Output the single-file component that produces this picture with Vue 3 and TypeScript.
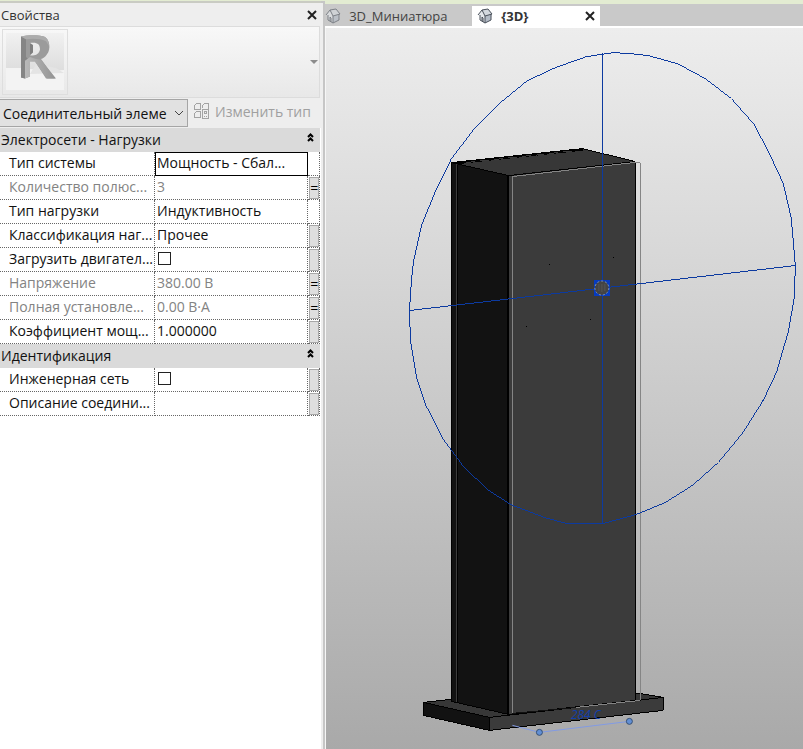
<script setup lang="ts">
import { ref } from 'vue'

interface Property {
  id: string
  label: string
  value: string | boolean
  readonly?: boolean
  selected?: boolean
  link?: '' | '='
}

interface Group {
  title: string
  rows: Property[]
}

const groups = ref<Group[]>([
  {
    title: 'Электросети - Нагрузки',
    rows: [
      { id: 'system', label: 'Тип системы', value: 'Мощность - Сбал...', selected: true },
      { id: 'poles', label: 'Количество полюс...', value: '3', readonly: true, link: '=' },
      { id: 'load', label: 'Тип нагрузки', value: 'Индуктивность' },
      { id: 'class', label: 'Классификация наг...', value: 'Прочее', link: '' },
      { id: 'motor', label: 'Загрузить двигател...', value: false, link: '' },
      { id: 'voltage', label: 'Напряжение', value: '380.00 В', readonly: true, link: '=' },
      { id: 'power', label: 'Полная установле...', value: '0.00 В·А', readonly: true, link: '=' },
      { id: 'factor', label: 'Коэффициент мощ...', value: '1.000000', link: '' },
    ],
  },
  {
    title: 'Идентификация',
    rows: [
      { id: 'network', label: 'Инженерная сеть', value: false, link: '' },
      { id: 'description', label: 'Описание соедини...', value: '', link: '' },
    ],
  },
])

const tabs = [
  { title: '3D_Миниатюра', active: false },
  { title: '{3D}', active: true },
]

const ring = [
  [613, 52], [630, 53], [648, 55], [677, 63], [705, 78], [731, 98], [754, 124], [770, 155],
  [783, 183], [791, 218], [795, 265], [794, 297], [788, 331], [777, 369], [761, 403], [742, 433],
  [718, 462], [692, 485], [665, 502], [636, 514], [603, 523], [566, 523], [544, 517], [510, 504],
  [487, 489], [463, 466], [443, 439], [426, 406], [416, 376], [410, 340], [409, 310], [411, 280],
  [413, 261], [421, 225], [434, 193], [451, 158], [474, 128], [500, 102], [527, 80], [555, 67],
  [586, 56],
].map(([x, y]) => `${x + 0.5},${y + 0.5}`).join(' ')
</script>

<template>
  <div class="app">
    <aside class="panel">
      <header class="panel-title">
        <span>Свойства</span>
        <button class="close" type="button" aria-label="Закрыть">
          <svg width="10" height="10" viewBox="0 0 10 10"><path d="M1 1l8 8M9 1l-8 8" /></svg>
        </button>
      </header>

      <div class="preview">
        <div class="thumb">
          <svg width="60" height="60" viewBox="0 0 60 60">
            <defs>
              <linearGradient id="sky" x1="0" y1="0" x2="0" y2="1">
                <stop offset="0" stop-color="#f1f1f1" />
                <stop offset="1" stop-color="#dddddd" />
              </linearGradient>
              <linearGradient id="leg" x1="0" y1="0" x2="1" y2="0">
                <stop offset="0" stop-color="#b9b9b9" />
                <stop offset="1" stop-color="#929292" />
              </linearGradient>
            </defs>
            <path d="M1 1h58v38l-20-2-38 0z" fill="url(#sky)" />
            <path d="M1 36h17l20 4 21-2v20H1z" fill="#f3f3f3" />
            <path d="M25 42l34-1-8-5-20-4z" fill="#e4e4e4" />
            <g transform="translate(-1 -1) scale(1 0.93)">
              <path fill-rule="evenodd" d="M17 6C24 4 34 4 40 6c6 3 7 14 3 19-2 3-4 5-6 5l14 21h-9L30 31l-4 1v17l-5 2-4-1zM26 13v13c6 1 9-1 10-6 0-6-3-8-10-7z" fill="#9b9b9b" />
              <path d="M17 6l5 3v19l4 4-5 4v15l-4-1z" fill="#858585" />
              <path d="M21 32l5-4 6 2 5 1 15 20h-9L31 33l-5 0v16l-5 2z" fill="url(#leg)" />
              <path d="M17 6C24 4 34 4 40 6c4 2 5 6 5 10l-3-5C36 8 28 8 22 9z" fill="#acacac" />
              <path d="M26 13l3 2v8l-3 3z" fill="#7f7f7f" />
            </g>
          </svg>
        </div>
        <button class="drop" type="button" aria-label="Выбрать тип">
          <svg width="8" height="4" viewBox="0 0 8 4"><path d="M0 0h8L4 4z" /></svg>
        </button>
      </div>

      <div class="filter">
        <div class="select">
          <select aria-label="Категория">
            <option>Соединительный элеме</option>
          </select>
          <svg width="10" height="6" viewBox="0 0 10 6"><path d="M1 1l4 4 4-4" /></svg>
        </div>
        <button class="edit-type" type="button" disabled>
          <svg width="17" height="17" viewBox="0 0 17 17" shape-rendering="crispEdges">
            <path d="M1.500 6.500v-4l2-2h4v6zM9.500 4.500v-2l2-2h4v5M1.500 14.500v-4l2-2h4v6zM9.500 6.500h6v9h-6zM11.500 8.500h2v2h-2zM11 13.500h1M13 13.500h1" />
          </svg>
          <span>Изменить тип</span>
        </button>
      </div>

      <table class="grid">
        <colgroup>
          <col class="col-name" />
          <col />
          <col class="col-link" />
        </colgroup>
        <tbody v-for="group in groups" :key="group.title">
          <tr class="group">
            <th colspan="3" scope="rowgroup">
              <div class="group-head">
                <span>{{ group.title }}</span>
                <button type="button" aria-label="Свернуть">
                  <svg width="7" height="9" viewBox="0 0 7 9"><path d="M1 4l2.500-2.500L6 4M1 8l2.500-2.500L6 8" /></svg>
                </button>
              </div>
            </th>
          </tr>
          <tr v-for="row in group.rows" :key="row.id" :class="{ muted: row.readonly }">
            <th class="name" scope="row"><label :for="row.id">{{ row.label }}</label></th>
            <td class="value" :class="{ selected: row.selected }">
              <input v-if="typeof row.value === 'boolean'" :id="row.id" v-model="row.value" type="checkbox" />
              <input v-else :id="row.id" v-model="row.value" type="text" :readonly="row.readonly" />
            </td>
            <td class="link">
              <button v-if="row.link !== undefined" type="button" aria-label="Связать параметр">{{ row.link }}</button>
            </td>
          </tr>
        </tbody>
      </table>
    </aside>

    <div class="splitter"></div>

    <main class="view">
      <nav class="tabs">
        <div v-for="tab in tabs" :key="tab.title" class="tab" :class="{ active: tab.active }">
          <svg class="house" width="16" height="16" viewBox="0 0 16 16">
            <path d="M1 7l4-5 6-1 4 5-1 6-6 3-5-3V8z" fill="#e4e7eb" />
            <path d="M8 8l6-2v6l-6 3z" fill="#b3bbc6" />
            <path d="M8 8l6-2 1 0-4-5-6 1z" fill="#d3d8de" />
            <path d="M1 7l4-5 6-1 4 5-7 2-3-6M3 7v5l5 3V8M8 15l6-3V6M5 13V9l1 1v4" fill="none" stroke="#4a515b" />
          </svg>
          <a href="#">{{ tab.title }}</a>
          <button v-if="tab.active" class="close" type="button" aria-label="Закрыть вид">
            <svg width="10" height="10" viewBox="0 0 10 10"><path d="M1 1l8 8M9 1l-8 8" /></svg>
          </button>
        </div>
      </nav>

      <div class="canvas">
        <svg class="scene" viewBox="325 28 478 721" preserveAspectRatio="xMidYMid meet">
          <g shape-rendering="crispEdges" stroke-width="1">
            <g stroke="#000">
              <path d="M423.500 702.500L583.500 684.500 663.500 697.500 489.500 717.500z" fill="#373737" />
              <path d="M423.500 702.500L489.500 717.500V730.500L423.500 715.500z" fill="#121212" />
              <path d="M489.500 717.500L663.500 697.500V710.500L489.500 730.500z" fill="#3b3b3b" />
              <path d="M451.500 162.500L582.500 148.500 635.500 161.500 508.500 175.500z" fill="#373737" />
              <path d="M451.500 162.500L508.500 175.500V714.500L451.500 701.500z" fill="#121212" />
              <path d="M508.500 175.500L635.500 161.500V700.500L508.500 714.500z" fill="#3b3b3b" />
              <path d="M453.500 163.500L583.500 149.500" stroke-width="2" />
              <path d="M457.500 164.500V702" />
              <path d="M507.500 176V714" />
            </g>
            <path d="M456.500 163.500V702" stroke="#3d3d3d" fill="none" />
            <path d="M466 162.500l110-12" stroke="#3b3b3b" stroke-dasharray="9 5" fill="none" />
            <path d="M512.500 714.500V176.500L633.500 162.500H640.500V700.500L576.500 707.500" stroke="#858585" fill="none" />
            <path d="M512.500 713.500L576.500 707.500" stroke="#111" fill="none" />
            <path d="M549 264h1v1h-1zM613 257h1v1h-1zM526 326h1v1h-1zM590 319h1v1h-1z" fill="#000" />
            <g stroke="#0c3aa0" fill="none">
              <polygon :points="ring" />
              <path d="M602.500 53V523M409.500 310.500L795.500 265.500" />
            </g>
            <rect x="594" y="280" width="16" height="16" fill="#063bc0" />
          </g>
          <circle cx="602" cy="288" r="7" fill="#444" stroke="#8196b5" stroke-dasharray="2 2" />
          <path d="M599 284v7M602 284v8M605 284v7" fill="none" stroke="#555" />
          <g fill="none" stroke="#829be4" stroke-width="1">
            <path d="M512.500 725.500L539.500 732.500 629.500 721.500" />
            <g fill="#628fd4" stroke="#354f73">
              <circle cx="539.500" cy="732.500" r="3" />
              <circle cx="629.500" cy="721.500" r="3" />
            </g>
          </g>
          <text x="571" y="719" class="dim">284 С</text>
        </svg>
      </div>
    </main>
  </div>
</template>

<style>
body {
  margin: 0;
}
</style>

<style scoped>
.app {
  display: flex;
  box-sizing: border-box;
  min-height: 100vh;
  background: #e3ecd2;
  font-family: "Open Sans", "Noto Sans", sans-serif;
  font-size: 14px;
  color: #111;
}

button {
  padding: 0;
  border: 0;
  background: none;
  font: inherit;
  color: inherit;
}

svg {
  display: block;
}

.panel {
  box-sizing: border-box;
  width: 40%;
  flex: none;
  margin-top: 1px;
  border-top: 2px solid #c9cbc3;
  background: linear-gradient(#eeeeee 0 125px, #ffffff 125px);
}

.panel-title {
  display: flex;
  align-items: center;
  justify-content: space-between;
  height: 23px;
  padding: 0 4px 0 1px;
  background: #eeeeee;
  font-size: 13px;
  color: #333;
}

.close svg {
  fill: none;
  stroke: #222;
  stroke-width: 2;
}

.preview {
  display: flex;
  align-items: center;
  justify-content: space-between;
  box-sizing: border-box;
  height: 72px;
  margin-right: 1px;
  padding: 0 1px 0 2px;
  border: solid #dcdcdc;
  border-width: 1px 1px 1px 0;
  background: linear-gradient(#f8f8f8, #e8e8e8);
}

.thumb {
  padding: 2px;
  border: 1px solid #dedede;
}

.drop svg {
  fill: #8c8c8c;
}

.filter {
  display: flex;
  align-items: center;
  gap: 5px;
  height: 30px;
}

.select {
  display: flex;
  align-items: center;
  box-sizing: border-box;
  width: 188px;
  height: 28px;
  border: 1px solid #a5a5a5;
  border-left: 0;
  background: #e1e1e1;
}

.select select {
  flex: 1;
  min-width: 0;
  height: 26px;
  padding: 0 0 0 3px;
  border: 0;
  appearance: none;
  background: none;
  font: inherit;
  color: #111;
}

.select svg {
  margin-right: 3px;
  fill: none;
  stroke: #444;
}

.edit-type {
  display: flex;
  align-items: center;
  gap: 5px;
  padding-bottom: 3px;
  color: #a0a0a0;
}

.edit-type svg {
  fill: none;
  stroke: #a3a3a3;
}

.grid {
  width: calc(100% - 1px);
  table-layout: fixed;
  border-collapse: separate;
  border-spacing: 0;
  background: #fff;
}

.col-name {
  width: 155px;
}

.col-link {
  width: 12px;
}

.grid th,
.grid td {
  box-sizing: border-box;
  height: 24px;
  padding: 0;
  font-weight: 400;
  line-height: 20px;
  text-align: left;
  white-space: nowrap;
}

.grid .group th {
  background: #dadada;
}

.group-head {
  display: flex;
  align-items: center;
  justify-content: space-between;
  padding: 0 6px 0 1px;
}

.group-head svg {
  margin-bottom: 6px;
  fill: none;
  stroke: #000;
  stroke-width: 2;
}

.grid .name {
  padding: 0 0 2px 9px;
  border-right: 1px dotted #666;
  border-bottom: 1px dotted #666;
}

.grid .value {
  padding-bottom: 2px;
  border-right: 1px dotted #666;
  border-bottom: 1px dotted #666;
}

.grid .selected {
  border: 1px solid #000;
  outline: 1px solid #000;
  outline-offset: -1px;
}

.grid .link {
  border-right: 1px dotted #666;
  border-bottom: 1px dotted #666;
}

.value input[type="text"] {
  display: block;
  box-sizing: border-box;
  width: 100%;
  height: 20px;
  padding: 0 0 0 2px;
  border: 0;
  outline: 0;
  background: none;
  font: inherit;
  color: inherit;
}

.value.selected input[type="text"] {
  padding-left: 1px;
}

.value input[type="checkbox"] {
  display: block;
  width: 13px;
  height: 13px;
  margin: 0 0 0 3px;
  border: 1px solid #222;
  box-sizing: border-box;
  appearance: none;
  background: #fff;
}

.link button {
  display: block;
  box-sizing: border-box;
  width: 10px;
  height: 22px;
  margin-left: 1px;
  border: 1px solid #a8a8a8;
  background: #dedede;
  color: #000;
}

.muted {
  color: #838383;
}

.splitter {
  box-sizing: border-box;
  width: 4px;
  flex: none;
  margin-top: 1px;
  border: solid #c6c6c6;
  border-width: 2px 2px 0 0;
  background: #eeeeee;
}

.view {
  display: flex;
  flex: 1;
  flex-direction: column;
  min-width: 0;
  padding-top: 4px;
}

.tabs {
  display: flex;
  align-items: flex-end;
  height: 22px;
  border-bottom: 2px solid #fff;
  background: #c9c9c9;
}

.tab {
  display: flex;
  align-items: center;
  gap: 8px;
  box-sizing: border-box;
  width: 147px;
  height: 20px;
  font-size: 13px;
}

.tab a {
  color: #444;
  text-decoration: none;
}

.tab:not(.active) .house {
  opacity: 0.6;
}

.tab.active {
  width: 128px;
  padding: 0 5px;
  background: #fff;
}

.tab.active a {
  flex: 1;
  font-weight: 700;
  color: #333;
}

.canvas {
  display: flex;
  flex: 1;
  border-left: 1px solid #f6f6f6;
  background: linear-gradient(#ededed, #a9a9a9);
}

.scene {
  flex: 1;
  min-width: 0;
  margin-left: -1px;
}

.dim {
  font-family: "Open Sans", sans-serif;
  font-size: 12px;
  font-style: italic;
  fill: #103fae;
}
</style>
